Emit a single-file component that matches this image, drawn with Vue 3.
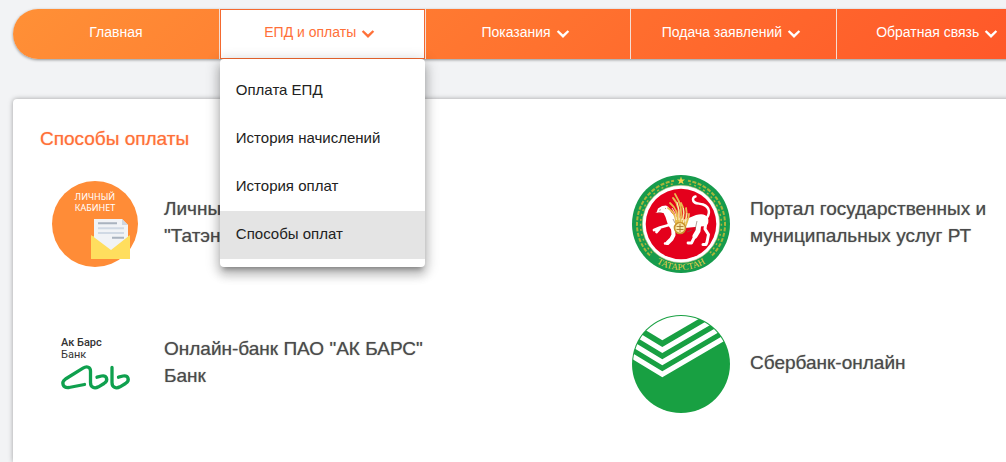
<template>
  <div class="page">

    <!-- Main menu -->
    <nav class="menu">
      <div v-for="item in items" :key="item.title" class="menu-item">
        <button type="button" class="menu-button" :class="{ active: opened === item.title }" @click="toggle(item)">
          <span class="label">{{ item.title }}</span>
          <svg v-if="item.dropdown" class="arrow" viewBox="0 0 24 24" aria-hidden="true">
            <path d="M16.600 8.200 12 12.600 7.400 8.200 5.800 9.800l6.200 6.200 6.200-6.200z" />
          </svg>
        </button>

        <div v-if="item.links && opened === item.title" class="dropdown">
          <a
            v-for="link in item.links"
            :key="link"
            href="#"
            class="dropdown-link"
            :class="{ current: link === current }"
            @click.prevent="current = link"
          >{{ link }}</a>
        </div>
      </div>
    </nav>

    <!-- Payment methods -->
    <main class="card">
      <h1>Способы оплаты</h1>

      <div class="methods">
        <a href="#" class="method">
          <svg class="logo" viewBox="0 0 98 98" aria-hidden="true">
            <circle cx="49" cy="49" r="43" fill="#ff8c37" />
            <text class="cabinet" x="49" y="25">ЛИЧНЫЙ</text>
            <text class="cabinet" x="49" y="36">КАБИНЕТ</text>
            <path d="M45 61h39v23H45z" fill="#f4c94f" />
            <path d="M48 44h28l6 6v20L65 80 48 70z" fill="#f1f3f6" />
            <path d="M76 44v6h6z" fill="#cfd6e0" />
            <path d="M52 48.300h19M66 62.700h12" stroke="#a9b3bf" stroke-width="2" />
            <path d="M52 53.300h26M52 58h26" stroke="#d0d9e4" stroke-width="2" />
            <path d="M45 60l20 15 19-15v24H45z" fill="#ffde5e" />
          </svg>
          <span class="name">Личный кабинет<br>"Татэнергосбыт"</span>
        </a>

        <a href="#" class="method">
          <svg class="logo" viewBox="0 0 98 98" aria-hidden="true">
            <defs>
              <path id="rim" d="M3 49a46 46 0 0 0 92 0" />
            </defs>
            <circle cx="49" cy="49" r="49" fill="#169b4c" />
            <!-- floral rim -->
            <g fill="none" stroke="#a9b53c">
              <path d="M18 80.500A44 44 0 0 1 42 5.800M80 80.500A44 44 0 0 0 56 5.800" stroke-width="2" stroke-dasharray="4 1.500" />
              <path d="M20 78A41.500 41.500 0 0 1 43 8.500M78 78A41.500 41.500 0 0 0 55 8.500" stroke-width="1.500" stroke-dasharray="2 3" />
            </g>
            <path d="M49 1.500l1 3h3l-2.300 1.800.9 3L49 7.500l-2.600 1.800.9-3L45 4.500h3z" fill="#f3d34b" />
            <text class="rim-text"><textPath href="#rim" startOffset="50%">ТАТАРСТАН</textPath></text>
            <circle cx="49" cy="49" r="38.700" fill="#fff" stroke="#b9c27a" stroke-width=".6" />
            <circle cx="49" cy="49" r="35.300" fill="#e4001c" />
            <!-- winged leopard -->
            <path d="M24.500 37.500 26 33.500l4-2.500 4-.5 2.500 1.500 2.500 5 4 4.500 10 3 11-4.500q9-2.500 12 3 1.500 5-2 8l-11 1-10 1-6 4-7-1-4-6-2.500-8-2-4-4.500-.5-4 .5z" fill="#fff" />
            <g fill="none" stroke="#fff" stroke-linecap="round" stroke-linejoin="round">
              <path d="M37 50 28 52.500l-6 2.500M28 53l-3.500 4" stroke-width="2.800" />
              <path d="M41 52l.5 8-2 4-4 4" stroke-width="4" />
              <path d="M37 66l-1.500 2.500H33" stroke-width="2.500" />
              <path d="M67 47l-1 9-3 5" stroke-width="5" />
              <path d="M63 61l-3.500 7H56" stroke-width="2.800" />
              <path d="M74 46l-1 8 3.500 5.500-1.500 7.500-1 2.500h-3" stroke-width="3" />
              <path d="M73 45c6-6 5-13-2-15.500-4.500-1.500-10-.5-10-5q0-2.500 2.500-3" stroke-width="2.500" />
            </g>
            <path d="M27 35.300l2-.6M26 38.200l3.500-.4M33 33l1 1M41 44l2 4M65 46l-2 9M55 57l5-2" fill="none" stroke="#7d5d50" stroke-width=".6" />
            <g fill="none" stroke="#e8bd50" stroke-width="1.800" stroke-linecap="round">
              <path d="M44 49c0-8-2-12-8-16M45 48c1-10-1-15-7-20M46 48c2-11 1-19-5-25M48 48c3-11 1-20-5-29M50 48c3-9 2-15-1-20M52 49c3-7 3-12 2-16M54 50c1-4 3-7 3-11" />
            </g>
            <path d="M44.500 45q0-7-4.500-12M47 45q1-10-2-18M50.500 45q2-7 1-12M53 47q2-5 2-9" fill="none" stroke="#fff3cf" stroke-width=".9" />
            <circle cx="48" cy="53" r="5.500" fill="#fae9a8" stroke="#c9922e" stroke-width="1.600" />
            <path d="M48 49v8M44.500 51.500h7M44.500 54.500h7" stroke="#a97730" stroke-width=".9" />
          </svg>
          <span class="name">Портал государственных и муниципальных услуг РТ</span>
        </a>

        <a href="#" class="method">
          <svg class="logo" viewBox="0 0 98 98" aria-hidden="true">
            <text class="bank-name" x="15" y="31">Ак Барс</text>
            <text class="bank-kind" x="15" y="43">Банк</text>
            <g fill="none" stroke="#0fa04e" stroke-width="3.300" stroke-linecap="round" stroke-linejoin="round">
              <path d="M38.500 69.500 23 72.500c-6 .8-8.500-5-3.500-8.500L37 53.200c4-2.500 7.500-1 7.500 2.800v11.500c0 5 4 6.500 8 4.300l5.500-3.300c5-3.500 2.500-8.500-2.500-7.500l-4.500 1.200" />
              <path d="M66 52.500v15c0 5 4 6.500 8 4.300l5.500-3.300c5-3.500 2.500-8.500-2.500-7.500L72.500 62.200" />
            </g>
          </svg>
          <span class="name">Онлайн-банк ПАО "АК БАРС" Банк</span>
        </a>

        <a href="#" class="method">
          <svg class="logo" viewBox="0 0 98 98" aria-hidden="true">
            <defs>
              <clipPath id="disc"><circle cx="49" cy="49" r="48" /></clipPath>
            </defs>
            <circle cx="49" cy="49" r="49" fill="#18a042" />
            <g clip-path="url(#disc)" fill="#fff">
              <path d="M-10 1 30.300 25.200 72 .9V-10h-82z" />
              <path d="M-10 7.700 30.300 31.900 100-8.700v6L30.300 37.900-10 13.700z" />
              <path d="M-10 20 30.300 44.200 100 3.600v6L30.300 50.200-10 26z" />
              <path d="M-10 32 30.300 56.200 100 15.600v6L30.300 62.200-10 38z" />
            </g>
          </svg>
          <span class="name">Сбербанк-онлайн</span>
        </a>
      </div>
    </main>

  </div>
</template>

<script setup>
import { ref } from 'vue'

const items = [
  { title: 'Главная' },
  {
    title: 'ЕПД и оплаты',
    dropdown: true,
    links: ['Оплата ЕПД', 'История начислений', 'История оплат', 'Способы оплат']
  },
  { title: 'Показания', dropdown: true },
  { title: 'Подача заявлений', dropdown: true },
  { title: 'Обратная связь', dropdown: true }
]

const opened = ref('ЕПД и оплаты')
const current = ref('Способы оплат')

function toggle(item) {
  opened.value = opened.value === item.title ? '' : item.title
}
</script>

<style>
body {
  background: #f2f3f5;
}
</style>

<style scoped>
.page {
  display: flex;
  flex-direction: column;
  gap: 40px;
  box-sizing: border-box;
  height: 100vh;
  padding: 9px 13px 0;
  overflow: hidden;
  font-family: "Liberation Sans", Arial, sans-serif;
}

.menu {
  position: relative;
  z-index: 1;
  display: grid;
  grid-template-columns: repeat(6, 1fr);
  flex-shrink: 0;
  min-width: 1235px;
  height: 50px;
  border-radius: 25px;
  background: linear-gradient(135deg, #ff9036, #ff4b26);
  box-shadow: 0 1px 3px rgba(0, 0, 0, 0.4);
}

.menu-item {
  position: relative;
}

.menu-item + .menu-item {
  border-left: 1px solid #f5ddd3;
}

.menu-button {
  display: flex;
  align-items: center;
  justify-content: center;
  width: 100%;
  height: 100%;
  padding: 0;
  border: 0;
  background: none;
  color: #fff;
  font-family: inherit;
  font-size: 14px;
  cursor: pointer;
}

.menu-button.active {
  border: 1px solid #f4692f;
  background: #fff;
  color: #ff7038;
}

.label {
  padding-bottom: 4px;
}

.arrow {
  width: 24px;
  height: 24px;
  fill: currentColor;
}

.dropdown {
  position: absolute;
  top: 100%;
  left: 0;
  right: 0;
  padding: 8px 0;
  border-radius: 4px;
  background: #fff;
  box-shadow: 0 5px 5px -3px rgba(0, 0, 0, 0.3), 0 8px 10px 1px rgba(0, 0, 0, 0.14), 0 3px 14px 2px rgba(0, 0, 0, 0.2);
}

.dropdown-link {
  display: block;
  padding: 0 16px 2px;
  color: #212121;
  font-size: 15px;
  line-height: 46px;
  text-decoration: none;
}

.dropdown-link.current {
  background: #e4e4e4;
}

.card {
  flex: 1 0 auto;
  box-sizing: border-box;
  min-width: 1235px;
  padding: 26px 36px 26px 27px;
  border-radius: 4px 4px 0 0;
  background: #fff;
  box-shadow: 0 0 5px rgba(0, 0, 0, 0.35);
}

h1 {
  margin: 0 0 23px;
  color: #ff7038;
  font-size: 19px;
  font-weight: 400;
  line-height: 27px;
  text-shadow: 0 0 1px rgba(255, 112, 56, 0.6);
}

.methods {
  display: grid;
  grid-template-columns: 1fr 1fr;
  row-gap: 42px;
}

.method {
  display: flex;
  align-items: center;
  gap: 20px;
  padding: 0 6px;
  color: #4a4a4a;
  font-size: 19px;
  line-height: 27px;
  text-decoration: none;
}

.name {
  max-width: 270px;
  padding-bottom: 4px;
  text-shadow: 0 0 1px rgba(74, 74, 74, 0.6);
}

.logo {
  flex-shrink: 0;
  width: 98px;
  height: 98px;
}

.cabinet {
  fill: #fff;
  font-family: "Noto Sans", sans-serif;
  font-size: 9px;
  text-anchor: middle;
}

.rim-text {
  fill: #f0d04b;
  font-family: "Liberation Serif", serif;
  font-size: 9px;
  text-anchor: middle;
}

.bank-name,
.bank-kind {
  fill: #333;
  font-family: Roboto, sans-serif;
  font-size: 11px;
}

.bank-name {
  font-weight: 500;
}
</style>
